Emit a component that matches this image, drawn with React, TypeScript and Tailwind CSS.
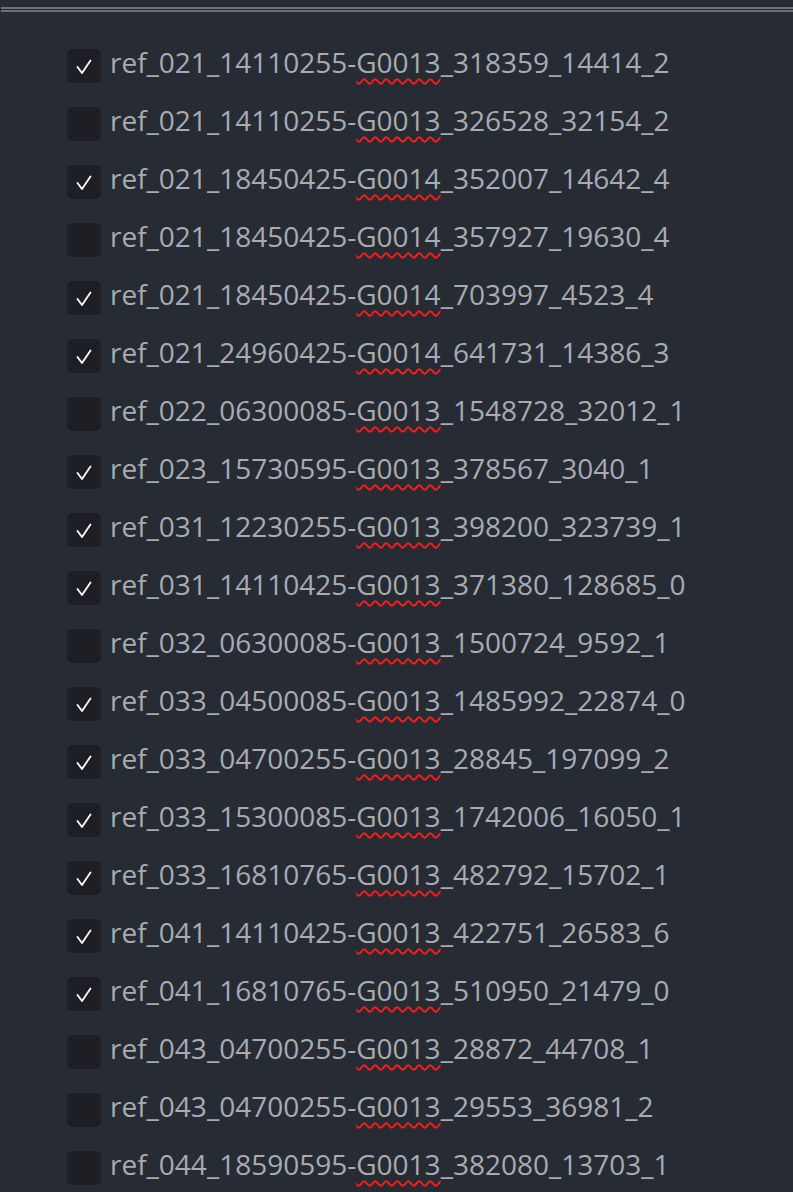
import React from "react";

interface Item {
  pre: string;
  word: string;
  post: string;
  checked: boolean;
}

const items: Item[] = [
  { pre: "ref_021_14110255-", word: "G0013", post: "_318359_14414_2", checked: true },
  { pre: "ref_021_14110255-", word: "G0013", post: "_326528_32154_2", checked: false },
  { pre: "ref_021_18450425-", word: "G0014", post: "_352007_14642_4", checked: true },
  { pre: "ref_021_18450425-", word: "G0014", post: "_357927_19630_4", checked: false },
  { pre: "ref_021_18450425-", word: "G0014", post: "_703997_4523_4", checked: true },
  { pre: "ref_021_24960425-", word: "G0014", post: "_641731_14386_3", checked: true },
  { pre: "ref_022_06300085-", word: "G0013", post: "_1548728_32012_1", checked: false },
  { pre: "ref_023_15730595-", word: "G0013", post: "_378567_3040_1", checked: true },
  { pre: "ref_031_12230255-", word: "G0013", post: "_398200_323739_1", checked: true },
  { pre: "ref_031_14110425-", word: "G0013", post: "_371380_128685_0", checked: true },
  { pre: "ref_032_06300085-", word: "G0013", post: "_1500724_9592_1", checked: false },
  { pre: "ref_033_04500085-", word: "G0013", post: "_1485992_22874_0", checked: true },
  { pre: "ref_033_04700255-", word: "G0013", post: "_28845_197099_2", checked: true },
  { pre: "ref_033_15300085-", word: "G0013", post: "_1742006_16050_1", checked: true },
  { pre: "ref_033_16810765-", word: "G0013", post: "_482792_15702_1", checked: true },
  { pre: "ref_041_14110425-", word: "G0013", post: "_422751_26583_6", checked: true },
  { pre: "ref_041_16810765-", word: "G0013", post: "_510950_21479_0", checked: true },
  { pre: "ref_043_04700255-", word: "G0013", post: "_28872_44708_1", checked: false },
  { pre: "ref_043_04700255-", word: "G0013", post: "_29553_36981_2", checked: false },
  { pre: "ref_044_18590595-", word: "G0013", post: "_382080_13703_1", checked: false },
];

const App = () => {
  return (
    <div className="w-[793px] h-[1192px] overflow-hidden bg-[#272b33] font-['Open_Sans',sans-serif]">
      {/* double rule at the top */}
      <div className="pt-[7px] pl-[1px]">
        <div className="h-[2px] bg-[#6c7079]" />
        <div className="h-[1px]" />
        <div className="h-[2px] bg-[#6c7079]" />
      </div>

      <ul className="pl-[67px] pt-[37px] flex flex-col gap-[24px]">
        {items.map((item, i) => (
          <li key={i} className="flex items-center h-[34px]">
            <span className="w-[34px] h-[34px] shrink-0 rounded-[5px] bg-[#1d1f24]">
              {item.checked && (
                <svg width="34" height="34" viewBox="0 0 34 34">
                  <polyline
                    points="10.5,18 15,24 23.5,11.5"
                    fill="none"
                    stroke="#ffffff"
                    strokeWidth="1.8"
                    strokeLinecap="round"
                    strokeLinejoin="round"
                  />
                </svg>
              )}
            </span>
            <span className="ml-[9px] mb-[8px] text-[28px] leading-none text-[#a8abb1] whitespace-nowrap">
              {item.pre}
              <span className="underline decoration-wavy decoration-[#ff1a1a] decoration-[2px] underline-offset-[5px]">
                {item.word}
              </span>
              {item.post}
            </span>
          </li>
        ))}
      </ul>
    </div>
  );
};

export default App;
